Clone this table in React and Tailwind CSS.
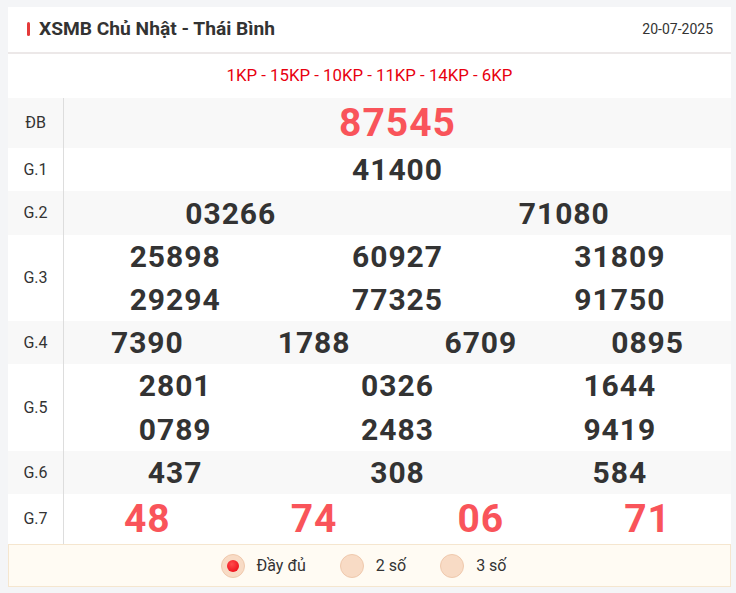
import React, { useState } from "react";

const prizes = [
  { label: "ĐB", cols: 1, nums: ["87545"], big: true },
  { label: "G.1", cols: 1, nums: ["41400"] },
  { label: "G.2", cols: 2, nums: ["03266", "71080"], h: "h-[44px]" },
  { label: "G.3", cols: 3, nums: ["25898", "60927", "31809", "29294", "77325", "91750"] },
  { label: "G.4", cols: 4, nums: ["7390", "1788", "6709", "0895"] },
  { label: "G.5", cols: 3, nums: ["2801", "0326", "1644", "0789", "2483", "9419"], h: "h-[43.5px]" },
  { label: "G.6", cols: 3, nums: ["437", "308", "584"] },
  { label: "G.7", cols: 4, nums: ["48", "74", "06", "71"], big: true },
];

const gridCols = {
  1: "grid-cols-1",
  2: "grid-cols-2",
  3: "grid-cols-3",
  4: "grid-cols-4",
};

const Radio = ({ checked, label, onClick }) => (
  <button onClick={onClick} className="flex items-center gap-[12px]">
    <span className="w-[24px] h-[24px] rounded-full bg-[#f8dbc5] border border-[#efc9ad] flex items-center justify-center">
      {checked && (
        <span className="w-[12px] h-[12px] rounded-full bg-[radial-gradient(circle_at_40%_35%,#ff4a4a,#e8000f)]" />
      )}
    </span>
    <span className="text-[16px] text-[#333]">{label}</span>
  </button>
);

export default function App() {
  const [mode, setMode] = useState(0);

  return (
    <div className="min-h-screen bg-[#f4f5f7] pt-[7px] pl-[8px] pr-[5px] font-['Roboto',sans-serif]">
      <div className="bg-white">
        {/* Header */}
        <div className="h-[47px] flex items-center justify-between pl-[19px] pr-[18px] border-b-2 border-[#ece8e8]">
          <div className="flex items-center gap-[9px]">
            <span className="w-[3px] h-[14px] bg-[#e43a3a] rounded-sm" />
            <h1 className="text-[19.2px] font-bold text-[#333]">XSMB Chủ Nhật - Thái Bình</h1>
          </div>
          <span className="text-[14px] text-[#333]">20-07-2025</span>
        </div>

        <div className="h-[44px] flex items-center justify-center text-[16.8px] text-[#e8000f]">
          1KP - 15KP - 10KP - 11KP - 14KP - 6KP
        </div>

        {/* Results */}
        <div>
          {prizes.map((p, i) => (
            <div
              key={p.label}
              className={`flex ${i % 2 === 0 ? "bg-[#f8f8f8]" : "bg-white"}`}
            >
              <div className="w-[56px] shrink-0 border-r border-[#dddddd] flex items-center justify-center text-[16px] text-[#333]">
                {p.label}
              </div>
              <div className={`flex-1 grid ${gridCols[p.cols]}`}>
                {p.nums.map((n, j) => (
                  <div
                    key={j}
                    className={
                      p.big
                        ? "h-[50px] flex items-center justify-center text-[39px] font-bold text-[#f9545a] tracking-[1px]"
                        : `${p.h || "h-[43px]"} flex items-center justify-center text-[30px] font-bold text-[#333] tracking-[1px]`
                    }
                  >
                    {n}
                  </div>
                ))}
              </div>
            </div>
          ))}
        </div>

        {/* Footer */}
        <div className="h-[43px] bg-[#fffbf3] border border-[#f5e6cf] flex items-center justify-center gap-[34px] pr-[12px]">
          <Radio checked={mode === 0} label="Đầy đủ" onClick={() => setMode(0)} />
          <Radio checked={mode === 1} label="2 số" onClick={() => setMode(1)} />
          <Radio checked={mode === 2} label="3 số" onClick={() => setMode(2)} />
        </div>
      </div>
    </div>
  );
}
